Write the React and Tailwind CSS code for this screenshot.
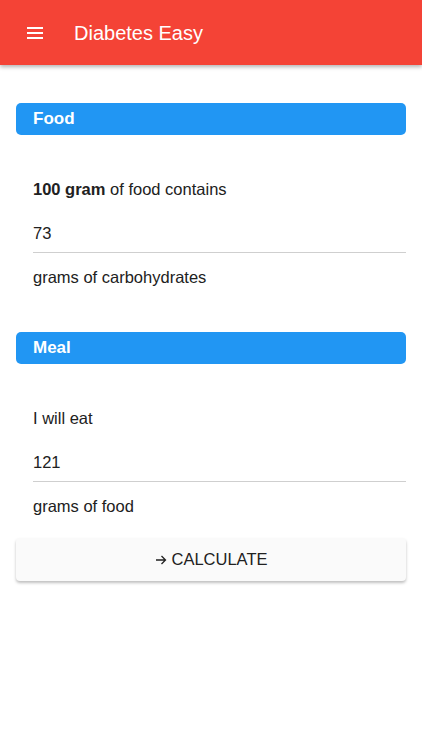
import React, { useState } from 'react';

const Section = ({ title }) => (
    <div className="mx-4 h-8 rounded-[5px] bg-[#2196f3] flex items-center px-[17px]">
        <span className="text-white text-[17px] font-semibold">{title}</span>
    </div>
);

const Field = ({ label, value, onChange, suffix }) => (
    <div className="pl-[33px] pr-4 pt-[32px] text-[16.5px]">
        <div className="h-[44px] flex items-center">{label}</div>
        <div className="h-[42px] pt-[4px] flex items-center border-b border-[#cfcfcf]">
            <input
                value={value}
                onChange={(e) => onChange(e.target.value)}
                className="w-full bg-transparent outline-none"
            />
        </div>
        <div className="h-[48px] flex items-center">{suffix}</div>
    </div>
);

const App = () => {
    const [carbs, setCarbs] = useState('73');
    const [amount, setAmount] = useState('121');

    return (
        <div className="min-h-[750px] bg-white text-[#212121]" style={{ fontFamily: '"Liberation Sans", Arial, sans-serif' }}>
            {/* Barra superior */}
            <header className="h-[65px] bg-[#f44336] flex items-center shadow-[0_2px_4px_rgba(0,0,0,0.3)]">
                <button className="ml-[27px] w-4 flex flex-col gap-[3px]">
                    <span className="block h-[2px] w-4 bg-white"></span>
                    <span className="block h-[2px] w-4 bg-white"></span>
                    <span className="block h-[2px] w-4 bg-white"></span>
                </button>
                <h1 className="ml-[31px] text-white text-[20px]">Diabetes Easy</h1>
            </header>

            <div className="pt-[38px]">
                <Section title="Food" />
                <Field
                    label={<span><b className="font-bold">100 gram</b> of food contains</span>}
                    value={carbs}
                    onChange={setCarbs}
                    suffix="grams of carbohydrates"
                />

                <div className="mt-[31px]">
                    <Section title="Meal" />
                </div>
                <Field label="I will eat" value={amount} onChange={setAmount} suffix="grams of food" />

                <div className="mx-4 mt-[8px]">
                    <button className="w-full h-[43px] rounded-[4px] bg-[#fafafa] shadow-[0_2px_3px_rgba(0,0,0,0.25)] text-[16.5px] text-[#212121] flex items-center justify-center">
                        <svg width="12" height="12" viewBox="0 0 24 24" className="mr-[5px]" fill="none" stroke="currentColor" strokeWidth="2.6">
                            <path d="M2 12h19M13 4l8 8-8 8" />
                        </svg>
                        CALCULATE
                    </button>
                </div>
            </div>
        </div>
    );
};

export default App;
